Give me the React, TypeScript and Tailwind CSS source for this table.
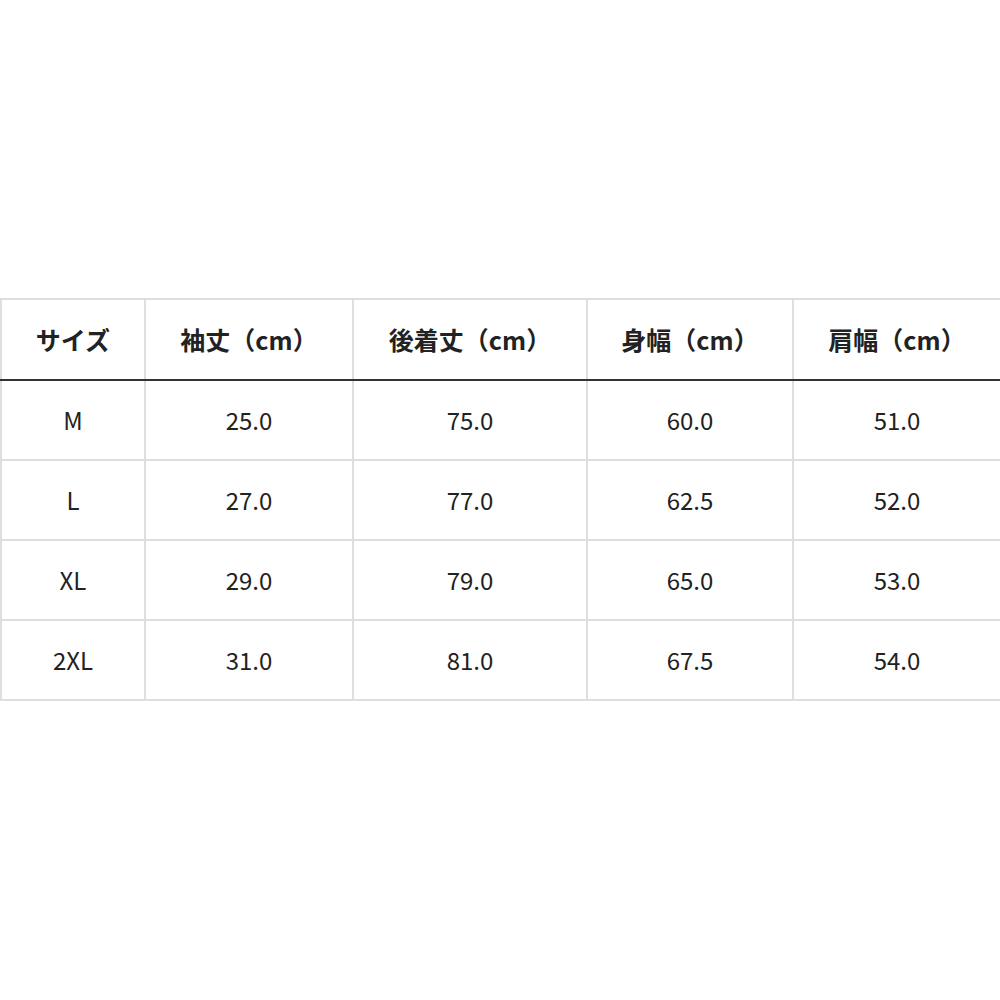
import React from 'react';

const headers = ['サイズ', '袖丈（cm）', '後着丈（cm）', '身幅（cm）', '肩幅（cm）'];

const rows = [
  ['M', '25.0', '75.0', '60.0', '51.0'],
  ['L', '27.0', '77.0', '62.5', '52.0'],
  ['XL', '29.0', '79.0', '65.0', '53.0'],
  ['2XL', '31.0', '81.0', '67.5', '54.0'],
];

const widths = ['w-[144px]', 'w-[208px]', 'w-[234px]', 'w-[206px]', 'w-[208px]'];

export default function App() {
  return (
    <div
      className="w-[1000px] h-[1000px] bg-white pt-[298px]"
      style={{ fontFamily: '"Noto Sans CJK JP", "Noto Sans", sans-serif' }}
    >
      <table className="w-[1000px] border-collapse table-fixed text-[#222]">
        <thead>
          <tr className="h-[81px]">
            {headers.map((h, i) => (
              <th
                key={h}
                className={`${widths[i]} border-2 border-[#dedede] border-b-[#333] text-[25px] font-bold text-center align-middle`}
              >
                {h}
              </th>
            ))}
          </tr>
        </thead>
        <tbody>
          {rows.map((r) => (
            <tr key={r[0]} className="h-[80px]">
              {r.map((c, i) => (
                <td
                  key={i}
                  className="border-2 border-[#dedede] text-[24px] font-normal text-center align-middle"
                >
                  {c}
                </td>
              ))}
            </tr>
          ))}
        </tbody>
      </table>
    </div>
  );
}
